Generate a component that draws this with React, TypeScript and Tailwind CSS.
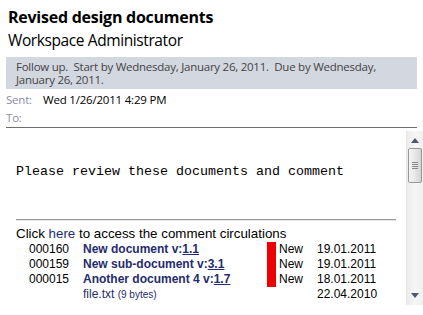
import React from 'react'

const rows = [
  { id: '000160', name: 'New document v:', ver: '1.1', status: 'New', date: '19.01.2011' },
  { id: '000159', name: 'New sub-document v:', ver: '3.1', status: 'New', date: '19.01.2011' },
  { id: '000015', name: 'Another document 4 v:', ver: '1.7', status: 'New', date: '18.01.2011' },
]

function Scrollbar() {
  return (
    <div className="relative w-[17px] shrink-0 bg-gradient-to-r from-[#ececec] via-[#f6f6f6] to-[#f0f0f0] border-l border-[#e6e6e6]">
      {/* up arrow */}
      <svg className="absolute left-[4px] top-[7px]" width="8" height="5" viewBox="0 0 8 5">
        <path d="M0 5 L4 0 L8 5 Z" fill="#4a5777" />
      </svg>
      {/* thumb */}
      <div className="absolute left-[1px] top-[17px] w-[14px] h-[35px] rounded-[2px] border border-[#979797] bg-gradient-to-r from-[#f4f4f4] via-[#e8e8e8] to-[#d4d4d4] flex flex-col items-center justify-center gap-[1px]">
        <div className="w-[6px] h-px bg-[#8a8a8a]" />
        <div className="w-[6px] h-px bg-[#8a8a8a]" />
        <div className="w-[6px] h-px bg-[#8a8a8a]" />
        <div className="w-[6px] h-px bg-[#8a8a8a]" />
      </div>
      {/* down arrow */}
      <svg className="absolute left-[4px] bottom-[7px]" width="8" height="5" viewBox="0 0 8 5">
        <path d="M0 0 L8 0 L4 5 Z" fill="#4a5777" />
      </svg>
    </div>
  )
}

export default function App() {
  return (
    <div className="w-[423px] h-[315px] bg-white overflow-hidden flex flex-col" style={{ fontFamily: '"Open Sans", "Noto Sans", sans-serif' }}>
      {/* Header */}
      <div className="px-2 pt-[6px]">
        <h1 className="text-[16px] leading-[22px] font-bold text-black tracking-[-0.25px]">Revised design documents</h1>
        <div className="text-[15.5px] leading-[24px] text-black tracking-[-0.4px]">Workspace Administrator</div>
      </div>

      {/* Info band */}
      <div className="mx-[6px] mt-[5px] h-[32px] bg-[#d3d7e0] px-[10px] pt-[3px] text-[11.5px] leading-[13px] text-[#444] tracking-[-0.25px]">
        Follow up.&nbsp; Start by Wednesday, January 26, 2011.&nbsp; Due by Wednesday, January 26, 2011.
      </div>

      {/* Sent / To */}
      <div className="mx-[6px] border-b border-[#6e6e6e] text-[11.5px] tracking-[-0.2px]">
        <div className="flex h-[20px] items-center pt-[2px]">
          <span className="w-[37px] text-[#8d8aa8]">Sent:</span>
          <span className="text-black">Wed 1/26/2011 4:29 PM</span>
        </div>
        <div className="flex h-[18px] items-center">
          <span className="text-[#8d8aa8]">To:</span>
        </div>
      </div>

      {/* Body */}
      <div className="flex flex-1 pl-[6px] pt-[3px] min-h-0">
        <div className="flex-1 pl-[10px] pr-[10px] overflow-hidden">
          <div className="mt-[33px] text-[13.33px] leading-[16px] text-black" style={{ fontFamily: '"Liberation Mono", monospace' }}>
            Please review these documents and comment
          </div>
          <div className="mt-[39px] h-[2px] border-t border-[#9a9a9a] border-b border-b-[#e4e4e4]" />
          <div style={{ fontFamily: '"Liberation Sans", Arial, sans-serif' }}>
            <div className="mt-[5px] text-[13.33px] leading-[15px] text-black">
              Click <span className="text-[#1f2c6e]">here</span> to access the comment circulations
            </div>
            <div className="flex text-[12px] leading-[15px] mt-[1px]">
              <div className="w-[67px] pl-[13px] flex flex-col">
                {rows.map(r => (
                  <div key={r.id}>{r.id}</div>
                ))}
                <div>&nbsp;</div>
              </div>
              <div className="w-[184px] flex flex-col">
                {rows.map(r => (
                  <div key={r.id} className="font-bold text-[#1f2c6e]">
                    {r.name}
                    <span className="underline">{r.ver}</span>
                  </div>
                ))}
                <div className="text-[#1f2c6e]">
                  file.txt <span className="text-[10px]">(9 bytes)</span>
                </div>
              </div>
              <div className="w-[9px] flex flex-col">
                <div className="h-[45px] bg-[#ee0000]" />
              </div>
              <div className="w-[41px] pl-[3px] flex flex-col">
                {rows.map(r => (
                  <div key={r.id}>{r.status}</div>
                ))}
              </div>
              <div className="flex flex-col">
                {rows.map(r => (
                  <div key={r.id}>{r.date}</div>
                ))}
                <div>22.04.2010</div>
              </div>
            </div>
          </div>
        </div>
        <Scrollbar />
      </div>
      <div className="h-[10px]" />
    </div>
  )
}
